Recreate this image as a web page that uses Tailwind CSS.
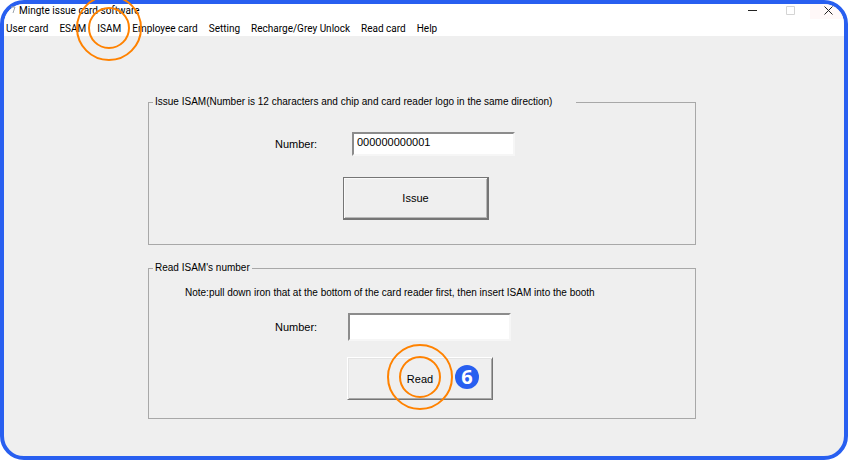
<!DOCTYPE html>
<html lang="en">
<head>
    <meta charset="UTF-8">
    <meta name="viewport" content="width=device-width, initial-scale=1.0">
    <title>Mingte issue card software</title>
    <script src="https://cdn.jsdelivr.net/npm/@tailwindcss/browser@4"></script>
</head>
<body class="bg-white">

    <!-- Window -->
    <div class="flex flex-col min-h-screen border-4 border-[#285ff0] rounded-3xl bg-[#efefef] text-black">

        <!-- Title bar and menu, the tint sits behind the close button -->
        <header class="bg-white bg-[linear-gradient(#fff8f8,#fff8f8)] bg-[length:34px_15px] bg-right-top bg-no-repeat rounded-t-[20px] font-[Roboto,sans-serif] text-[10px]">
            <div class="flex items-center justify-between h-3 pl-1">
                <div class="flex items-center gap-[3px]">
                    <svg class="w-2 h-3" viewBox="0 0 8 12" fill="none" stroke="#9aa3ad"><path d="M3 3h4L5 9"/></svg>
                    <h1>Mingte issue card software</h1>
                </div>
                <div class="flex items-center gap-[29px] pr-[11px]">
                    <button type="button" aria-label="Minimize">
                        <svg class="block w-[9px] h-[9px]" viewBox="0 0 9 9" stroke="#222"><path d="M0 4.5h9"/></svg>
                    </button>
                    <button type="button" aria-label="Maximize" disabled>
                        <svg class="block w-[9px] h-[9px]" viewBox="0 0 9 9" fill="none" stroke="#d4d4d4"><path d="M.5 .5h8v8h-8z"/></svg>
                    </button>
                    <button type="button" aria-label="Close">
                        <svg class="block w-[9px] h-[9px]" viewBox="0 0 9 9" stroke="#222"><path d="M.5 .5l8 8M8.5 .5l-8 8"/></svg>
                    </button>
                </div>
            </div>
            <nav class="flex items-center gap-[11px] h-5 pl-0.5 pt-1 whitespace-nowrap">
                <button type="button">User card</button>
                <button type="button">ESAM</button>
                <div class="relative flex">
                    <button type="button">ISAM</button>
                    <svg class="absolute top-1/2 left-1/2 -translate-1/2 w-[66px] h-[66px] max-w-none pointer-events-none" viewBox="0 0 66 66" fill="none" stroke="#ff8200" stroke-width="2"><circle cx="33" cy="33" r="32"/><circle cx="33" cy="33" r="20"/></svg>
                </div>
                <button type="button">Employee card</button>
                <button type="button">Setting</button>
                <button type="button">Recharge/Grey Unlock</button>
                <button type="button">Read card</button>
                <button type="button">Help</button>
            </nav>
        </header>

        <!-- Forms -->
        <main class="flex flex-col gap-[15px] pt-[58px] pb-9 pl-36 pr-37 font-['Liberation_Sans',Arial,sans-serif] text-[11px] leading-4">
            <fieldset class="border border-[#a8a8a8] pb-6">
                <legend class="ml-1 pl-0.5 pr-6 text-[10px]">Issue ISAM(Number is 12 characters and chip and card reader logo in the same direction)</legend>
                <div class="flex items-center pt-[22px] pl-[126px]">
                    <label for="issueNumber" class="w-[77px]">Number:</label>
                    <input id="issueNumber" type="text" value="000000000001" class="w-[163px] h-6 pl-[3px] pb-1 bg-white border-2 border-t-[#8c8c8c] border-l-[#8c8c8c] border-r-[#f6f6f6] border-b-[#f6f6f6]">
                </div>
                <div class="flex pt-[21px] pl-[194px]">
                    <button type="button" class="w-[146px] h-[43px] border border-[#757575] border-r-2 border-b-2 shadow-[inset_1px_1px_#fafafa,inset_-1px_-1px_#b8b8b8]">Issue</button>
                </div>
            </fieldset>

            <fieldset class="border border-[#a8a8a8] pb-[18px]">
                <legend class="ml-1 px-0.5 text-[10px]">Read ISAM's number</legend>
                <p class="pt-[9px] pl-9 text-[10px] leading-4">Note:pull down iron that at the bottom of the card reader first, then insert ISAM into the booth</p>
                <div class="flex items-center pt-3 pl-[126px]">
                    <label for="readNumber" class="w-[73px]">Number:</label>
                    <input id="readNumber" type="text" class="w-[163px] h-7 pl-[3px] bg-white border-2 border-t-[#8c8c8c] border-l-[#8c8c8c] border-r-[#f6f6f6] border-b-[#f6f6f6]">
                </div>
                <div class="flex pt-4 pl-[198px]">
                    <div class="relative">
                        <button type="button" class="block w-[146px] h-[43px] border border-t-white border-l-white border-r-[#757575] border-b-[#757575] shadow-[inset_1px_1px_#e4e4e4,inset_-1px_-1px_#a8a8a8]">Read</button>
                        <svg class="absolute top-5 left-1/2 -translate-1/2 w-[66px] h-[66px] max-w-none pointer-events-none" viewBox="0 0 66 66" fill="none" stroke="#ff8200" stroke-width="2"><circle cx="33" cy="33" r="32"/><circle cx="33" cy="33" r="20"/></svg>
                        <span class="absolute top-2 right-3.5 flex justify-center items-center w-6 h-6 rounded-full bg-[#285ff0] text-white text-xl font-bold font-['Open_Sans',sans-serif]">6</span>
                    </div>
                </div>
            </fieldset>
        </main>
    </div>

</body>
</html>
